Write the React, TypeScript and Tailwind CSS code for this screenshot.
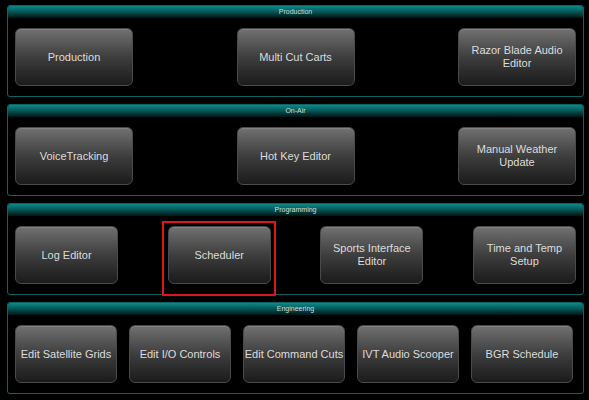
import React from "react";

type Section = {
  title: string;
  items: string[];
  kind: "wide" | "four" | "five";
};

const sections: Section[] = [
  { title: "Production", items: ["Production", "Multi Cut Carts", "Razor Blade Audio Editor"], kind: "wide" },
  { title: "On-Air", items: ["VoiceTracking", "Hot Key Editor", "Manual Weather Update"], kind: "wide" },
  { title: "Programming", items: ["Log Editor", "Scheduler", "Sports Interface Editor", "Time and Temp Setup"], kind: "four" },
  {
    title: "Engineering",
    items: ["Edit Satellite Grids", "Edit I/O Controls", "Edit Command Cuts", "IVT Audio Scooper", "BGR Schedule"],
    kind: "five",
  },
];

function Tile({ label, width, marked, nowrap }: { label: string; width: string; marked?: boolean; nowrap?: boolean }) {
  return (
    <div className={`relative ${width} h-[58px]`}>
      <button
        className={`w-full h-full rounded-[6px] border border-[#4a4a4a] bg-gradient-to-b from-[#717171] via-[#3e3e3e] to-[#1b1b1b] text-[#dcdcdc] text-[11px] leading-[13px] px-1 text-center flex items-center justify-center shadow-[inset_0_1px_0_rgba(255,255,255,0.12)] ${
          nowrap ? "whitespace-nowrap" : ""
        }`}
      >
        {label}
      </button>
      {marked && (
        <div className="absolute left-[-6px] top-[-5px] w-[114px] h-[75px] border-2 border-[#e0151b] pointer-events-none" />
      )}
    </div>
  );
}

export default function App() {
  return (
    <div
      className="w-[589px] h-[400px] bg-black pt-[5px] pl-[7px] pr-[5px] flex flex-col gap-[7px]"
      style={{ fontFamily: '"Liberation Sans", Arial, sans-serif' }}
    >
      {sections.map((s) => (
        <section key={s.title} className="h-[92px] rounded-[3px] border border-[#0c6464] flex flex-col overflow-visible">
          <div className="h-[12px] rounded-t-[2px] bg-gradient-to-b from-[#0b8a8a] via-[#075454] to-[#011616] text-[7px] leading-[12px] text-center text-[#c9dede]">
            {s.title}
          </div>
          <div
            className={`flex-1 flex items-center px-[7px] ${
              s.kind === "five" ? "gap-[12px] justify-start" : "justify-between"
            }`}
          >
            {s.items.map((it) => (
              <Tile
                key={it}
                label={it}
                width={s.kind === "wide" ? "w-[118px]" : s.kind === "four" ? "w-[103px]" : "w-[102px]"}
                marked={it === "Scheduler"}
                nowrap={s.kind === "five"}
              />
            ))}
          </div>
        </section>
      ))}
    </div>
  );
}
